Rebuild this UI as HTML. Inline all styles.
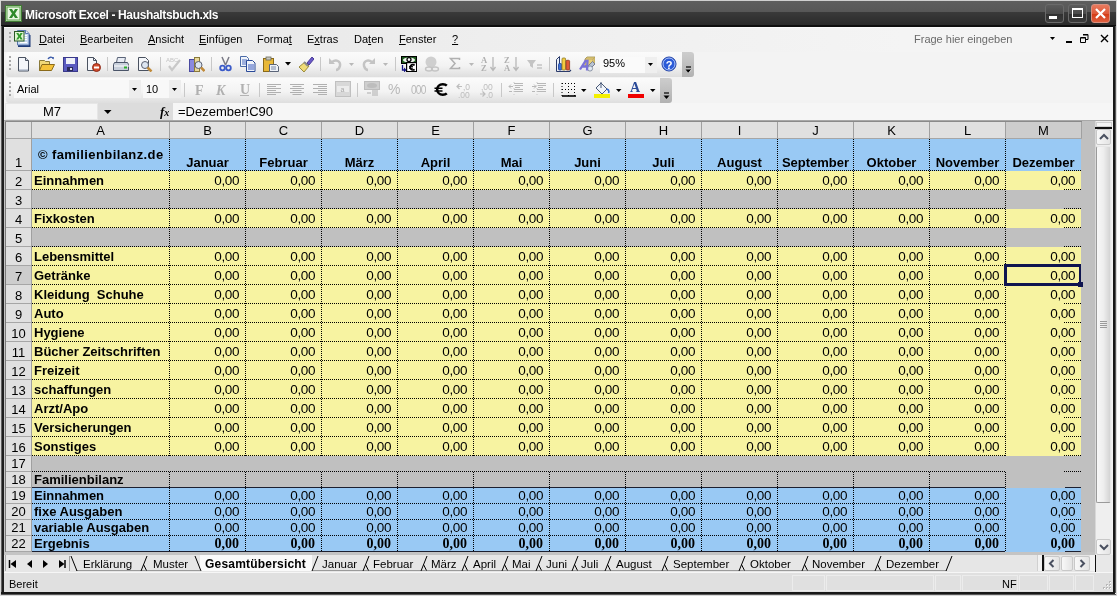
<!DOCTYPE html>
<html><head><meta charset="utf-8">
<style>
*{margin:0;padding:0;box-sizing:border-box}
html,body{-webkit-font-smoothing:antialiased;width:1117px;height:596px;overflow:hidden;background:#f3f3f3;font-family:"Liberation Sans",sans-serif;font-size:11px;color:#000}
.a{position:absolute}
#title{position:absolute;left:0;top:0;width:1117px;height:27px;background:linear-gradient(#cfcfcf 0,#cfcfcf 1px,#5e5e5e 1px,#575757 12px,#3a3a3a 12px,#2a2a2a 25px,#0e0e0e 25px)}
#title .t{position:absolute;left:25px;top:8px;color:#fff;font-weight:bold;font-size:12px;letter-spacing:-0.35px;line-height:14px}
.menu{position:absolute;top:33px;font-size:11px;line-height:13px}
.menu u{text-decoration:underline;text-underline-offset:1px;text-decoration-thickness:1px}
.tb{position:absolute;border-radius:3px;background:linear-gradient(#fbfbfb,#f3f3f3 55%,#dedede)}
.grip{position:absolute;width:2px;height:2px;background:#a8a8a8;box-shadow:0 4px #a8a8a8,0 8px #a8a8a8,0 12px #a8a8a8}
.sep{position:absolute;width:1px;height:18px;background:#c8c8c8}
.chev{position:absolute;border-radius:0 3px 3px 0;background:linear-gradient(#cdcdcd,#b2b2b2)}
.ch{position:absolute;top:123px;height:16px;text-align:center;font-size:13px;line-height:16px}
.rh{position:absolute;left:6px;width:25px;text-align:center;font-size:13px}
.rh span{position:absolute;left:0;width:25px;line-height:15px}
.hd{position:absolute;height:1px;background:repeating-linear-gradient(90deg,#000 0,#000 1px,transparent 1px,transparent 2px)}
.vd{position:absolute;width:1px;background:repeating-linear-gradient(180deg,#000 0,#000 1px,transparent 1px,transparent 2px)}
.tx{position:absolute;font-size:13px;line-height:15px;white-space:nowrap}
.n{font-size:13.5px;letter-spacing:-0.4px}
.b{font-weight:bold}
.c{text-align:center}
.r{text-align:right}
.s{font-family:"Liberation Serif",serif;font-weight:bold;font-size:14px}
.ic{position:absolute;width:16px;height:16px}

.tab{position:absolute;top:558px;font-size:11.5px;line-height:13px;white-space:nowrap}
.sb{position:absolute;border:1px solid #c8c8c8;border-radius:2px;background:linear-gradient(90deg,#f8f8f8,#e4e4e4)}
.sbv{position:absolute;border:1px solid #e8e8e8;border-left-color:#9a9a9a;border-bottom-color:#9a9a9a;border-radius:2px;background:linear-gradient(90deg,#f8f8f8,#eeeeee 50%,#d4d4d4)}
body>div.root{position:absolute;left:0;top:0;width:1117px;height:596px;will-change:transform}
</style></head><body><div class="root">

<div id="title"><div class="t">Microsoft Excel - Haushaltsbuch.xls</div></div>
<svg class="a" style="left:5px;top:5px" width="17" height="17" viewBox="0 0 17 17"><rect x="0.5" y="0.5" width="16" height="16" fill="#cfe8c4" stroke="#3f7a32"/><rect x="2" y="2" width="13" height="13" fill="#e9f6e2" stroke="#5aa04a" stroke-width="1"/><path d="M4 4h3l1.5 2.5L10 4h3l-3 4.5 3 4.5h-3l-1.5-2.5L7 13H4l3-4.5z" fill="#2f8a2a"/></svg>
<div class="a" style="left:1045px;top:4px;width:19px;height:19px;border-radius:3px;border:1px solid #6a6a6a;background:linear-gradient(#5c5c5c,#4a4a4a 50%,#303030 52%,#3a3a3a)"></div>
<div class="a" style="left:1049px;top:16px;width:8px;height:3px;background:#fff"></div>
<div class="a" style="left:1068px;top:4px;width:19px;height:19px;border-radius:3px;border:1px solid #6a6a6a;background:linear-gradient(#5c5c5c,#4a4a4a 50%,#303030 52%,#3a3a3a)"></div>
<div class="a" style="left:1072px;top:8px;width:11px;height:10px;border:1px solid #fff;border-top-width:2px"></div>
<div class="a" style="left:1091px;top:4px;width:19px;height:19px;border-radius:3px;border:1px solid #d89080;background:linear-gradient(#e87a5e,#de5a3a 50%,#d43a14 52%,#e06040)"></div>
<svg class="a" style="left:1091px;top:4px" width="19" height="19" viewBox="0 0 19 19"><path d="M5 5L14 14M14 5L5 14" stroke="#fff" stroke-width="2.2"/></svg>
<div class="a" style="left:0;top:0;width:1px;height:596px;background:#d8d8d8"></div>
<div class="a" style="left:1px;top:26px;width:1px;height:567px;background:#606060"></div><div class="a" style="left:2px;top:26px;width:2px;height:567px;background:#1e1e1e"></div><div class="a" style="left:4px;top:121px;width:1px;height:451px;background:#c4c4c4"></div>
<div class="a" style="left:1113px;top:26px;width:2px;height:567px;background:#181818"></div><div class="a" style="left:1115px;top:26px;width:1px;height:567px;background:#585858"></div>
<div class="a" style="left:1116px;top:0;width:1px;height:596px;background:#d8d8d8"></div>
<div class="a" style="left:1px;top:592px;width:1114px;height:2px;background:#181818"></div><div class="a" style="left:1px;top:594px;width:1115px;height:1px;background:#585858"></div>
<div class="a" style="left:0;top:595px;width:1117px;height:1px;background:#d8d8d8"></div>
<!-- menu bar -->
<div class="a" style="left:4px;top:27px;width:1109px;height:25px;background:linear-gradient(90deg,#e4e4e4,#eeeeee 480px,#f4f4f4 900px);border-top:1px solid #fafafa"></div>
<div class="grip" style="left:9px;top:32px;box-shadow:0 4px #b0b0b0,0 8px #b0b0b0"></div>
<svg class="a" style="left:13px;top:30px" width="19" height="18" viewBox="0 0 19 18"><path d="M5 2h9l3.5 3.5V17H5z" fill="#1e3a78"/><path d="M4.5 .5h8.5l3 3v11.5h-11.5z" fill="#c8daf2" stroke="#5a78b0"/><path d="M12.5 .5v3h3" fill="#eef4fc" stroke="#5a78b0"/><path d="M11 5.5h3M11 7.5h3M11 9.5h3M7 12.5h7" stroke="#fff"/><rect x="1.5" y="1.5" width="9.5" height="9.5" fill="#dff5d0" stroke="#2a5a26"/><path d="M3.2 3h2.2l1 1.8L7.5 3h2.2l-2 3.2 2 3.3H7.5L6.4 7.6 5.3 9.5H3.2l2.1-3.3z" fill="#2f9a2a"/></svg>
<div class="menu" style="left:39px"><u>D</u>atei</div>
<div class="menu" style="left:80px"><u>B</u>earbeiten</div>
<div class="menu" style="left:148px"><u>A</u>nsicht</div>
<div class="menu" style="left:199px"><u>E</u>infügen</div>
<div class="menu" style="left:257px">Forma<u>t</u></div>
<div class="menu" style="left:307px">E<u>x</u>tras</div>
<div class="menu" style="left:354px">Da<u>t</u>en</div>
<div class="menu" style="left:399px"><u>F</u>enster</div>
<div class="menu" style="left:452px"><u>?</u></div>
<div class="menu" style="left:914px;color:#6a6a6a">Frage hier eingeben</div>
<svg class="a" style="left:1050px;top:37px" width="6" height="4"><path d="M0 0h5l-2.5 3z" fill="#000"/></svg>
<div class="a" style="left:1066px;top:41px;width:6px;height:2px;background:#000"></div>
<svg class="a" style="left:1080px;top:34px" width="9" height="9" viewBox="0 0 9 9"><path d="M3 .5h5v5h-2M.5 3.5h5v5h-5z" fill="none" stroke="#000"/><path d="M3 1h5M1 4h5" stroke="#000"/></svg>
<svg class="a" style="left:1100px;top:34px" width="9" height="9" viewBox="0 0 9 9"><path d="M1 1l7 7M8 1L1 8" stroke="#000" stroke-width="1.4"/></svg>

<!-- standard toolbar -->
<div class="tb" style="left:6px;top:52px;width:688px;height:25px"></div>
<div class="chev" style="left:682px;top:52px;width:12px;height:25px"></div>
<svg class="a" style="left:685px;top:66px" width="7" height="8" viewBox="0 0 7 8"><path d="M1 1h5" stroke="#000" stroke-width="1.2"/><path d="M0.5 3.5h6l-3 3.5z" fill="#000"/><path d="M3.5 7l3-3.5" stroke="#fff" stroke-width=".8"/></svg>
<div class="grip" style="left:9px;top:56px"></div>
<!-- new -->
<svg class="ic" style="left:16px;top:56px" viewBox="0 0 16 16"><path d="M2.5 1.5h7l3 3v10.5h-10z" fill="#f4f6fa" stroke="#4a5260"/><path d="M9.5 1.5v3h3" fill="#d8dee8" stroke="#4a5260"/><path d="M3 14h9" stroke="#9aa6bc"/></svg>
<!-- open -->
<svg class="ic" style="left:39px;top:56px" viewBox="0 0 16 16"><path d="M0.5 4.5h5l1 1h4v9h-10z" fill="#f0d878" stroke="#8a7a3a"/><path d="M3 8.5h12.5l-3 6h-12z" fill="#f4c23a" stroke="#8a6a1a"/><path d="M9 3c1-2 4-2.5 5-.5" fill="none" stroke="#3a5aa8" stroke-width="1.3"/><path d="M12.5 1.5l2 2 .5-2.5z" fill="#3a5aa8"/></svg>
<!-- save -->
<svg class="ic" style="left:62px;top:56px" viewBox="0 0 16 16"><rect x="1.5" y="1.5" width="14" height="14" fill="#5a5ac0" stroke="#3a3a8a"/><rect x="4" y="2" width="9" height="6" fill="#eef0f8"/><rect x="5" y="11" width="6" height="4" fill="#2a2a5a"/><rect x="8" y="12" width="2" height="2" fill="#dde"/></svg>
<!-- permission -->
<svg class="ic" style="left:86px;top:56px" viewBox="0 0 16 16"><path d="M1.5 1.5h6l3 3v10h-9z" fill="#f4f6fa" stroke="#4a5260"/><path d="M7.5 1.5v3h3" fill="none" stroke="#4a5260"/><circle cx="10.5" cy="11.5" r="4" fill="#d24a2a" stroke="#8a2a1a"/><rect x="8" y="10.5" width="5" height="2" fill="#fff"/></svg>
<div class="sep" style="left:107px;top:57px;height:14px"></div>
<!-- print -->
<svg class="ic" style="left:113px;top:56px" viewBox="0 0 16 16"><path d="M4.5 1.5h8l-1 5h-8z" fill="#e8ecf4" stroke="#5a6478"/><path d="M1.5 6.5h13l1 2v6h-15v-6z" fill="#c8d0dc" stroke="#4a5468"/><path d="M1 10h15" stroke="#fff"/><rect x="11" y="10.5" width="3" height="2" fill="#2ab02a"/></svg>
<!-- preview -->
<svg class="ic" style="left:137px;top:56px" viewBox="0 0 16 16"><path d="M1.5 1.5h7l3 3v10h-10z" fill="#f4f6fa" stroke="#4a5260"/><circle cx="8" cy="9" r="3.5" fill="#dde6f2" stroke="#5a6070"/><path d="M10.5 11.5l4 4" stroke="#c08a3a" stroke-width="2.5"/></svg>
<div class="sep" style="left:160px;top:57px;height:14px"></div>
<!-- spelling (disabled) -->
<svg class="ic" style="left:166px;top:56px" viewBox="0 0 16 16"><text x="0" y="6" font-size="6" font-family="Liberation Sans" fill="#c4c4c4">ABC</text><path d="M3 10l3 4 8-10" fill="none" stroke="#c8c8c8" stroke-width="2.2"/></svg>
<!-- research -->
<svg class="ic" style="left:189px;top:56px" viewBox="0 0 16 16"><rect x="0.5" y="3.5" width="5" height="12" fill="#8a8ae0" stroke="#4a4aa0"/><rect x="5.5" y="1.5" width="5" height="14" fill="#e8d89a" stroke="#8a7a3a"/><circle cx="9.5" cy="9" r="3.5" fill="#dde6f2" stroke="#5a6070"/><path d="M12 11.5l3.5 3.5" stroke="#c08a3a" stroke-width="2.5"/></svg>
<div class="sep" style="left:211px;top:57px;height:14px"></div>
<!-- cut -->
<svg class="ic" style="left:217px;top:56px" viewBox="0 0 16 16"><path d="M5 1l3.5 8M12 1l-3.5 8" stroke="#7a7a86" stroke-width="1.5"/><circle cx="5.5" cy="12" r="2.3" fill="none" stroke="#3a5ac8" stroke-width="1.8"/><circle cx="11.5" cy="12" r="2.3" fill="none" stroke="#3a5ac8" stroke-width="1.8"/></svg>
<!-- copy -->
<svg class="ic" style="left:240px;top:56px" viewBox="0 0 16 16"><path d="M0.5 0.5h6l2 2v8h-8z" fill="#f0f4fa" stroke="#4a6aa8"/><path d="M2 4h5M2 6h5M2 8h5" stroke="#4a6ac0"/><path d="M6.5 4.5h6l2.5 2.5v8.5h-8.5z" fill="#f0f4fa" stroke="#2a4a98"/><path d="M8 9h6M8 11h6M8 13h6" stroke="#3a5ac0"/></svg>
<!-- paste -->
<svg class="ic" style="left:263px;top:56px" viewBox="0 0 16 16"><rect x="0.5" y="2.5" width="10" height="13" fill="#e8b838" stroke="#8a6a1a"/><rect x="3" y="1" width="5" height="3" fill="#c8c8c0" stroke="#6a6a5a" stroke-width=".8"/><path d="M6.5 8.5h7l2 2v5h-9z" fill="#eef2f8" stroke="#5a6478"/><path d="M8 11h5M8 13h5" stroke="#7a8aa8"/></svg>
<svg class="a" style="left:285px;top:62px" width="7" height="4"><path d="M0 0h6l-3 3.5z" fill="#000"/></svg>
<!-- format painter -->
<svg class="ic" style="left:298px;top:56px" viewBox="0 0 16 16"><path d="M9 7l5-6 2 2-5 6z" fill="#6a5ac8" stroke="#4a3a98"/><path d="M1 11l6-5 4 4-5 6z" fill="#f0dc78" stroke="#9a8a3a"/><path d="M6 6l4 4" stroke="#8a8a8a" stroke-width="2"/></svg>
<div class="sep" style="left:320px;top:57px;height:14px"></div>
<!-- undo -->
<svg class="ic" style="left:327px;top:56px" viewBox="0 0 16 16"><path d="M5 6c4-3 9-1 8 4-1 3-3 4-4 4" fill="none" stroke="#c4c4c4" stroke-width="2.4"/><path d="M2 2v6h6z" fill="#c4c4c4"/></svg>
<svg class="a" style="left:349px;top:63px" width="6" height="4"><path d="M0 0h5l-2.5 3z" fill="#b8b8b8"/></svg>
<!-- redo -->
<svg class="ic" style="left:361px;top:56px" viewBox="0 0 16 16"><path d="M11 6c-4-3-9-1-8 4 1 3 3 4 4 4" fill="none" stroke="#c4c4c4" stroke-width="2.4"/><path d="M14 2v6h-6z" fill="#c4c4c4"/></svg>
<svg class="a" style="left:383px;top:63px" width="6" height="4"><path d="M0 0h5l-2.5 3z" fill="#b8b8b8"/></svg>
<div class="sep" style="left:395px;top:57px;height:14px"></div>
<!-- euro converter -->
<svg class="ic" style="left:401px;top:56px" viewBox="0 0 16 16"><rect x="0.5" y="0.5" width="15" height="7" fill="#1e5a1e" stroke="#000"/><ellipse cx="8" cy="4" rx="6" ry="2.6" fill="#eef6ee"/><circle cx="8" cy="3.6" r="2" fill="#fff" stroke="#000" stroke-width="1.3"/><rect x="5.6" y="6.6" width="10" height="9" fill="#fff" stroke="#000" stroke-width="1.2"/><path d="M13.6 9.3a2.6 2.7 0 1 0 0 4" fill="none" stroke="#000" stroke-width="1.7"/><path d="M8 10.6h4M8 12.2h4" stroke="#000" stroke-width="1"/><path d="M1.5 9v5h2" fill="none" stroke="#141480" stroke-width="1.3"/><path d="M3 11.6l2.6 2.4-2.6 2.4z" fill="#141480"/></svg>
<!-- hyperlink disabled -->
<svg class="ic" style="left:424px;top:56px" viewBox="0 0 16 16"><circle cx="7" cy="6" r="5.5" fill="#cfcfcf"/><ellipse cx="5" cy="13" rx="3.5" ry="2" fill="none" stroke="#c4c4c4" stroke-width="1.4"/><ellipse cx="11" cy="13" rx="3.5" ry="2" fill="none" stroke="#c4c4c4" stroke-width="1.4"/></svg>
<!-- sum -->
<svg class="ic" style="left:447px;top:56px" viewBox="0 0 16 16"><path d="M12.5 4V2.5H3.5l4.5 5-4.5 5H12.5V11" fill="none" stroke="#b0b0b0" stroke-width="1.5"/></svg>
<svg class="a" style="left:469px;top:63px" width="6" height="4"><path d="M0 0h5l-2.5 3z" fill="#b8b8b8"/></svg>
<!-- sort az -->
<svg class="ic" style="left:481px;top:56px" viewBox="0 0 16 16"><text x="0" y="7" font-size="8.5" font-weight="bold" font-family="Liberation Serif" fill="#b0b0b0">A</text><text x="0" y="15" font-size="8.5" font-weight="bold" font-family="Liberation Serif" fill="#b0b0b0">Z</text><path d="M12 1v13M9.5 11l2.5 3.5 2.5-3.5" fill="none" stroke="#b8b8b8" stroke-width="1.3"/></svg>
<svg class="ic" style="left:504px;top:56px" viewBox="0 0 16 16"><text x="0" y="7" font-size="8.5" font-weight="bold" font-family="Liberation Serif" fill="#b0b0b0">Z</text><text x="0" y="15" font-size="8.5" font-weight="bold" font-family="Liberation Serif" fill="#b0b0b0">A</text><path d="M12 1v13M9.5 11l2.5 3.5 2.5-3.5" fill="none" stroke="#b8b8b8" stroke-width="1.3"/></svg>
<!-- filter -->
<svg class="ic" style="left:527px;top:56px" viewBox="0 0 16 16"><path d="M0 4h9L6 8v4L3 10V8z" fill="#c4c4c4"/><path d="M10 9h5M10 12h5" stroke="#c4c4c4" stroke-width="1.6"/></svg>
<div class="sep" style="left:549px;top:57px;height:14px"></div>
<!-- chart -->
<svg class="ic" style="left:556px;top:56px" viewBox="0 0 16 16"><path d="M0.5 15.5V3.5l3-3v12" fill="#e8f0fa" stroke="#2a3a6a"/><path d="M0.5 15.5h13l1.5-1.5" fill="none" stroke="#2a3a6a" stroke-width="1.1"/><rect x="2.5" y="7.5" width="3.2" height="6.5" rx="1" fill="#3a72d8" stroke="#1a3a90" stroke-width=".8"/><rect x="6" y="2" width="3.6" height="12" rx="1" fill="#f4cc40" stroke="#8a7a2a" stroke-width=".8"/><rect x="10" y="4.3" width="3.6" height="9.7" rx="1" fill="#e05a38" stroke="#8a3a1a" stroke-width=".8"/></svg>
<!-- drawing -->
<svg class="ic" style="left:579px;top:56px" viewBox="0 0 16 16"><path d="M6 3l2-2h8v7l-2 2H6z" fill="#e8d078" stroke="#9a8a4a" stroke-width=".8"/><path d="M6 3h8v7M14 3l2-2" fill="none" stroke="#b8a060" stroke-width=".8"/><path d="M9.5 9.5l4-4 2.5 2.5-4 4z" fill="#b8c4d4" stroke="#6a7088" stroke-width=".8"/><circle cx="11" cy="12.5" r="2.6" fill="#e0e8f0" stroke="#7a8498" stroke-width=".8"/><path d="M1 13.5L6.5 5h2l-.5 9.5M3.5 10.5h4.5" fill="none" stroke="#7a72d8" stroke-width="2.3"/></svg>
<!-- zoom box -->
<div class="a" style="left:600px;top:57px;width:57px;height:16px;background:#fafafa"></div>
<div class="a" style="left:645px;top:57px;width:12px;height:16px;background:#efefef"></div>
<div class="a" style="left:603px;top:55px;font-size:11px;line-height:16px">95%</div>
<svg class="a" style="left:648px;top:63px" width="6" height="4"><path d="M0 0h5l-2.5 3z" fill="#000"/></svg>
<!-- help -->
<svg class="ic" style="left:661px;top:56px" viewBox="0 0 16 16"><circle cx="8" cy="8" r="7" fill="#2a5ad8" stroke="#1a3aa0"/><circle cx="8" cy="8" r="6" fill="none" stroke="#cfe0ff" stroke-width=".8"/><text x="4.8" y="12.5" font-size="11" font-weight="bold" font-family="Liberation Sans" fill="#fff">?</text></svg>

<!-- formatting toolbar -->
<div class="tb" style="left:6px;top:78px;width:664px;height:25px"></div>
<div class="chev" style="left:660px;top:78px;width:12px;height:25px"></div>
<svg class="a" style="left:663px;top:92px" width="7" height="8" viewBox="0 0 7 8"><path d="M1 1h5" stroke="#000" stroke-width="1.2"/><path d="M0.5 3.5h6l-3 3.5z" fill="#000"/></svg>
<div class="grip" style="left:9px;top:82px"></div>
<div class="a" style="left:14px;top:80px;width:127px;height:18px;background:#f8f8f8"></div>
<div class="a" style="left:129px;top:80px;width:12px;height:18px;background:#ededed"></div>
<div class="a" style="left:17px;top:81px;font-size:11px;line-height:16px">Arial</div>
<svg class="a" style="left:132px;top:88px" width="6" height="4"><path d="M0 0h5l-2.5 3z" fill="#000"/></svg>
<div class="a" style="left:143px;top:80px;width:38px;height:18px;background:#f8f8f8"></div>
<div class="a" style="left:169px;top:80px;width:12px;height:18px;background:#ededed"></div>
<div class="a" style="left:146px;top:81px;font-size:11px;line-height:16px">10</div>
<svg class="a" style="left:172px;top:88px" width="6" height="4"><path d="M0 0h5l-2.5 3z" fill="#000"/></svg>
<div class="sep" style="left:184px;top:83px;height:14px"></div>
<div class="a" style="left:195px;top:83px;font:bold 14px 'Liberation Serif',serif;color:#b0b0b0;line-height:16px">F</div>
<div class="a" style="left:216px;top:83px;font:bold italic 14px 'Liberation Serif',serif;color:#b0b0b0;line-height:16px">K</div>
<div class="a" style="left:240px;top:82px;font:bold 14px 'Liberation Serif',serif;color:#b0b0b0;line-height:16px">U</div>
<div class="a" style="left:240px;top:95px;width:9px;height:1px;background:#b4b4b4"></div>
<div class="sep" style="left:259px;top:83px;height:14px"></div>
<svg class="ic" style="left:266px;top:82px" viewBox="0 0 16 16"><path d="M1 2.5h14M1 4.5h9M1 6.5h14M1 8.5h9M1 10.5h14M1 12.5h9" stroke="#b0b0b0"/></svg>
<svg class="ic" style="left:289px;top:82px" viewBox="0 0 16 16"><path d="M1 2.5h14M3.5 4.5h9M1 6.5h14M3.5 8.5h9M1 10.5h14M3.5 12.5h9" stroke="#b0b0b0"/></svg>
<svg class="ic" style="left:312px;top:82px" viewBox="0 0 16 16"><path d="M1 2.5h14M6 4.5h9M1 6.5h14M6 8.5h9M1 10.5h14M6 12.5h9" stroke="#b0b0b0"/></svg>
<svg class="ic" style="left:335px;top:81px" viewBox="0 0 16 16"><rect x="0.5" y="0.5" width="15" height="15" fill="#d8d8d8" stroke="#c0c0c0"/><rect x="2" y="5" width="12" height="6" fill="#ececec"/><text x="5.5" y="10.5" font-size="7" font-family="Liberation Sans" fill="#a8a8a8">a</text></svg>
<div class="sep" style="left:357px;top:83px;height:14px"></div>
<svg class="ic" style="left:364px;top:81px" viewBox="0 0 16 16"><rect x="0.5" y="0.5" width="15" height="8" fill="#cfcfcf" stroke="#bdbdbd"/><ellipse cx="8" cy="4.5" rx="5" ry="2.5" fill="#bdbdbd"/><path d="M3 12h4M8 10h6M8 12h6M8 14h6" stroke="#c4c4c4" stroke-width="1.4"/></svg>
<div class="a" style="left:388px;top:80px;font-size:14px;color:#b8b8b8;line-height:18px">%</div>
<div class="a" style="left:411px;top:82px;font-size:12px;color:#b8b8b8;line-height:17px;letter-spacing:-1px;transform:scaleX(0.85);transform-origin:0 0">000</div>
<svg class="a" style="left:434px;top:83px" width="14" height="13" viewBox="0 0 14 13"><path d="M12.8 2.6C11.8 1.6 10.4 1.3 8.8 1.3 5.2 1.3 3.2 3.8 3.2 6.5 3.2 9.4 5.4 11.7 8.8 11.7 10.4 11.7 11.8 11.3 12.8 10.3" fill="none" stroke="#000" stroke-width="2.5"/><path d="M0.5 5.2h8M0.5 8h8" stroke="#000" stroke-width="1.6"/></svg>
<svg class="ic" style="left:456px;top:82px" viewBox="0 0 16 16"><path d="M6 4.5H1M3.5 2L1 4.5 3.5 7" fill="none" stroke="#bdbdbd" stroke-width="1.2"/><text x="7" y="8" font-size="8.5" font-family="Liberation Sans" fill="#bdbdbd">,0</text><text x="2" y="15.5" font-size="8.5" font-family="Liberation Sans" fill="#bdbdbd">,00</text></svg>
<svg class="ic" style="left:479px;top:82px" viewBox="0 0 16 16"><text x="2" y="8" font-size="8.5" font-family="Liberation Sans" fill="#bdbdbd">,00</text><path d="M1 12h5M3.5 9.5L6 12l-2.5 2.5" fill="none" stroke="#bdbdbd" stroke-width="1.2"/><text x="7" y="15.5" font-size="8.5" font-family="Liberation Sans" fill="#bdbdbd">,0</text></svg>
<div class="sep" style="left:501px;top:83px;height:14px"></div>
<svg class="ic" style="left:508px;top:81px" viewBox="0 0 16 16"><path d="M6 2.5h9M7 4.5h8M7 6.5h5M6 8.5h9M1 10.5h3M6 10.5h9" stroke="#b8b8b8"/><path d="M5 5.5L1 5.5M3 3.5l-2 2 2 2" fill="none" stroke="#b8b8b8"/><path d="M6 1v14" stroke="#c8c8c8" stroke-dasharray="1 2"/></svg>
<svg class="ic" style="left:531px;top:81px" viewBox="0 0 16 16"><path d="M6 2.5h9M7 4.5h8M7 6.5h5M6 8.5h9M1 10.5h3M6 10.5h9" stroke="#b8b8b8"/><path d="M1 5.5h4M3 3.5l2 2-2 2" fill="none" stroke="#b8b8b8"/><path d="M6 1v14" stroke="#c8c8c8" stroke-dasharray="1 2"/></svg>
<div class="sep" style="left:553px;top:83px;height:14px"></div>
<svg class="ic" style="left:561px;top:82px" viewBox="0 0 16 16"><path d="M1 1.5h13M1 7.5h13M1 1v13M7.5 1v13M13.5 1v13" stroke="#000" stroke-dasharray="1 2"/><path d="M1 14h14" stroke="#000" stroke-width="1.6"/></svg>
<svg class="a" style="left:581px;top:89px" width="6" height="4"><path d="M0 0h5.5l-2.75 3z" fill="#000"/></svg>
<svg class="ic" style="left:594px;top:81px" viewBox="0 0 16 16"><path d="M2 7l5-5 6 6-5 5z" fill="#f0f4fa" stroke="#4a5a78"/><path d="M7 1v6" stroke="#4a5a78"/><path d="M13 8c2 1 2 3 1.5 4" fill="none" stroke="#3a6ad0" stroke-width="1.5"/></svg>
<div class="a" style="left:594px;top:94px;width:16px;height:4px;background:#f4f000"></div>
<svg class="a" style="left:616px;top:89px" width="6" height="4"><path d="M0 0h5.5l-2.75 3z" fill="#000"/></svg>
<div class="a" style="left:630px;top:80px;font:bold 14px 'Liberation Serif',serif;color:#2a4a98;line-height:16px">A</div>
<div class="a" style="left:628px;top:94px;width:16px;height:4px;background:#f00000"></div>
<svg class="a" style="left:650px;top:89px" width="6" height="4"><path d="M0 0h5.5l-2.75 3z" fill="#000"/></svg>

<!-- formula bar -->
<div class="a" style="left:5px;top:103px;width:93px;height:17px;background:#f5f5f5;border:1px solid #e6e6e6"></div>
<div class="a" style="left:98px;top:103px;width:75px;height:17px;background:#dcdcdc"></div>
<div class="a" style="left:173px;top:103px;width:940px;height:17px;background:#f6f6f6"></div>
<div class="a" style="left:4px;top:120px;width:1109px;height:1px;background:#a8a8a8"></div>
<div class="a" style="left:43px;top:104px;font-size:13px;line-height:15px">M7</div>
<svg class="a" style="left:104px;top:110px" width="8" height="5"><path d="M0 0h7.5l-3.75 4z" fill="#000"/></svg>
<div class="a" style="left:160px;top:104px;font:italic bold 13px 'Liberation Serif',serif;line-height:15px">f<span style="font-size:10px">x</span></div>
<div class="a" style="left:178px;top:104px;font-size:13px;line-height:15px">=Dezember!C90</div>

<div class="a" style="left:5px;top:121px;width:1090px;height:434px;background:#c0c0c0"></div>
<div class="a" style="left:5px;top:121px;width:1px;height:431px;background:#7a7a7a"></div>
<div class="a" style="left:5px;top:121px;width:1077px;height:1px;background:#8a8a8a"></div>
<div class="a" style="left:6px;top:122px;width:1076px;height:16px;background:#e0e0e0"></div>
<div class="a" style="left:1006px;top:122px;width:75px;height:16px;background:#cdcdcd"></div>
<div class="a" style="left:6px;top:138px;width:1076px;height:1px;background:#a6a6a6"></div>
<div class="a" style="left:31px;top:122px;width:1px;height:16px;background:#a0a0a0"></div>
<div class="a" style="left:169px;top:122px;width:1px;height:16px;background:#a0a0a0"></div>
<div class="ch" style="left:32px;width:137px">A</div>
<div class="a" style="left:245px;top:122px;width:1px;height:16px;background:#a0a0a0"></div>
<div class="ch" style="left:170px;width:75px">B</div>
<div class="a" style="left:321px;top:122px;width:1px;height:16px;background:#a0a0a0"></div>
<div class="ch" style="left:246px;width:75px">C</div>
<div class="a" style="left:397px;top:122px;width:1px;height:16px;background:#a0a0a0"></div>
<div class="ch" style="left:322px;width:75px">D</div>
<div class="a" style="left:473px;top:122px;width:1px;height:16px;background:#a0a0a0"></div>
<div class="ch" style="left:398px;width:75px">E</div>
<div class="a" style="left:549px;top:122px;width:1px;height:16px;background:#a0a0a0"></div>
<div class="ch" style="left:474px;width:75px">F</div>
<div class="a" style="left:625px;top:122px;width:1px;height:16px;background:#a0a0a0"></div>
<div class="ch" style="left:550px;width:75px">G</div>
<div class="a" style="left:701px;top:122px;width:1px;height:16px;background:#a0a0a0"></div>
<div class="ch" style="left:626px;width:75px">H</div>
<div class="a" style="left:777px;top:122px;width:1px;height:16px;background:#a0a0a0"></div>
<div class="ch" style="left:702px;width:75px">I</div>
<div class="a" style="left:853px;top:122px;width:1px;height:16px;background:#a0a0a0"></div>
<div class="ch" style="left:778px;width:75px">J</div>
<div class="a" style="left:929px;top:122px;width:1px;height:16px;background:#a0a0a0"></div>
<div class="ch" style="left:854px;width:75px">K</div>
<div class="a" style="left:1005px;top:122px;width:1px;height:16px;background:#a0a0a0"></div>
<div class="ch" style="left:930px;width:75px">L</div>
<div class="a" style="left:1081px;top:122px;width:1px;height:16px;background:#a0a0a0"></div>
<div class="ch" style="left:1006px;width:75px">M</div>
<div class="rh" style="top:139px;height:31px;background:#e0e0e0"><span style="top:16px">1</span></div>
<div class="a" style="left:6px;top:170px;width:25px;height:1px;background:#a6a6a6"></div>
<div class="rh" style="top:171px;height:18px;background:#e0e0e0"><span style="top:3px">2</span></div>
<div class="a" style="left:6px;top:189px;width:25px;height:1px;background:#a6a6a6"></div>
<div class="rh" style="top:190px;height:18px;background:#e0e0e0"><span style="top:3px">3</span></div>
<div class="a" style="left:6px;top:208px;width:25px;height:1px;background:#a6a6a6"></div>
<div class="rh" style="top:209px;height:18px;background:#e0e0e0"><span style="top:3px">4</span></div>
<div class="a" style="left:6px;top:227px;width:25px;height:1px;background:#a6a6a6"></div>
<div class="rh" style="top:228px;height:18px;background:#e0e0e0"><span style="top:3px">5</span></div>
<div class="a" style="left:6px;top:246px;width:25px;height:1px;background:#a6a6a6"></div>
<div class="rh" style="top:247px;height:18px;background:#e0e0e0"><span style="top:3px">6</span></div>
<div class="a" style="left:6px;top:265px;width:25px;height:1px;background:#a6a6a6"></div>
<div class="rh" style="top:266px;height:18px;background:#cdcdcd"><span style="top:3px">7</span></div>
<div class="a" style="left:6px;top:284px;width:25px;height:1px;background:#a6a6a6"></div>
<div class="rh" style="top:285px;height:18px;background:#e0e0e0"><span style="top:3px">8</span></div>
<div class="a" style="left:6px;top:303px;width:25px;height:1px;background:#a6a6a6"></div>
<div class="rh" style="top:304px;height:18px;background:#e0e0e0"><span style="top:3px">9</span></div>
<div class="a" style="left:6px;top:322px;width:25px;height:1px;background:#a6a6a6"></div>
<div class="rh" style="top:323px;height:18px;background:#e0e0e0"><span style="top:3px">10</span></div>
<div class="a" style="left:6px;top:341px;width:25px;height:1px;background:#a6a6a6"></div>
<div class="rh" style="top:342px;height:18px;background:#e0e0e0"><span style="top:3px">11</span></div>
<div class="a" style="left:6px;top:360px;width:25px;height:1px;background:#a6a6a6"></div>
<div class="rh" style="top:361px;height:18px;background:#e0e0e0"><span style="top:3px">12</span></div>
<div class="a" style="left:6px;top:379px;width:25px;height:1px;background:#a6a6a6"></div>
<div class="rh" style="top:380px;height:18px;background:#e0e0e0"><span style="top:3px">13</span></div>
<div class="a" style="left:6px;top:398px;width:25px;height:1px;background:#a6a6a6"></div>
<div class="rh" style="top:399px;height:18px;background:#e0e0e0"><span style="top:3px">14</span></div>
<div class="a" style="left:6px;top:417px;width:25px;height:1px;background:#a6a6a6"></div>
<div class="rh" style="top:418px;height:18px;background:#e0e0e0"><span style="top:3px">15</span></div>
<div class="a" style="left:6px;top:436px;width:25px;height:1px;background:#a6a6a6"></div>
<div class="rh" style="top:437px;height:18px;background:#e0e0e0"><span style="top:3px">16</span></div>
<div class="a" style="left:6px;top:455px;width:25px;height:1px;background:#a6a6a6"></div>
<div class="rh" style="top:456px;height:15px;background:#e0e0e0"><span style="top:0px">17</span></div>
<div class="a" style="left:6px;top:471px;width:25px;height:1px;background:#a6a6a6"></div>
<div class="rh" style="top:472px;height:15px;background:#e0e0e0"><span style="top:0px">18</span></div>
<div class="a" style="left:6px;top:487px;width:25px;height:1px;background:#a6a6a6"></div>
<div class="rh" style="top:488px;height:15px;background:#e0e0e0"><span style="top:0px">19</span></div>
<div class="a" style="left:6px;top:503px;width:25px;height:1px;background:#a6a6a6"></div>
<div class="rh" style="top:504px;height:15px;background:#e0e0e0"><span style="top:0px">20</span></div>
<div class="a" style="left:6px;top:519px;width:25px;height:1px;background:#a6a6a6"></div>
<div class="rh" style="top:520px;height:15px;background:#e0e0e0"><span style="top:0px">21</span></div>
<div class="a" style="left:6px;top:535px;width:25px;height:1px;background:#a6a6a6"></div>
<div class="rh" style="top:536px;height:15px;background:#e0e0e0"><span style="top:0px">22</span></div>
<div class="a" style="left:6px;top:551px;width:25px;height:1px;background:#a6a6a6"></div>
<div class="a" style="left:31px;top:138px;width:1px;height:414px;background:#a0a0a0"></div>
<div class="a" style="left:32px;top:139px;width:1049px;height:32px;background:#99c9f4"></div>
<div class="a" style="left:32px;top:171px;width:1049px;height:19px;background:#f7f3a1"></div>
<div class="a" style="left:32px;top:190px;width:1049px;height:19px;background:#c0c0c0"></div>
<div class="a" style="left:32px;top:209px;width:1049px;height:19px;background:#f7f3a1"></div>
<div class="a" style="left:32px;top:228px;width:1049px;height:19px;background:#c0c0c0"></div>
<div class="a" style="left:32px;top:247px;width:1049px;height:19px;background:#f7f3a1"></div>
<div class="a" style="left:32px;top:266px;width:1049px;height:19px;background:#f7f3a1"></div>
<div class="a" style="left:32px;top:285px;width:1049px;height:19px;background:#f7f3a1"></div>
<div class="a" style="left:32px;top:304px;width:1049px;height:19px;background:#f7f3a1"></div>
<div class="a" style="left:32px;top:323px;width:1049px;height:19px;background:#f7f3a1"></div>
<div class="a" style="left:32px;top:342px;width:1049px;height:19px;background:#f7f3a1"></div>
<div class="a" style="left:32px;top:361px;width:1049px;height:19px;background:#f7f3a1"></div>
<div class="a" style="left:32px;top:380px;width:1049px;height:19px;background:#f7f3a1"></div>
<div class="a" style="left:32px;top:399px;width:1049px;height:19px;background:#f7f3a1"></div>
<div class="a" style="left:32px;top:418px;width:1049px;height:19px;background:#f7f3a1"></div>
<div class="a" style="left:32px;top:437px;width:1049px;height:19px;background:#f7f3a1"></div>
<div class="a" style="left:32px;top:456px;width:1049px;height:16px;background:#c0c0c0"></div>
<div class="a" style="left:32px;top:472px;width:1049px;height:16px;background:#c0c0c0"></div>
<div class="a" style="left:32px;top:488px;width:1049px;height:16px;background:#99c9f4"></div>
<div class="a" style="left:32px;top:504px;width:1049px;height:16px;background:#99c9f4"></div>
<div class="a" style="left:32px;top:520px;width:1049px;height:16px;background:#99c9f4"></div>
<div class="a" style="left:32px;top:536px;width:1049px;height:16px;background:#99c9f4"></div>
<div class="hd" style="left:32px;top:170px;width:973px"></div>
<div class="hd" style="left:1064px;top:170px;width:17px"></div>
<div class="hd" style="left:32px;top:189px;width:973px"></div>
<div class="hd" style="left:1064px;top:189px;width:17px"></div>
<div class="hd" style="left:32px;top:208px;width:973px"></div>
<div class="hd" style="left:1064px;top:208px;width:17px"></div>
<div class="hd" style="left:32px;top:227px;width:973px"></div>
<div class="hd" style="left:1064px;top:227px;width:17px"></div>
<div class="hd" style="left:32px;top:246px;width:973px"></div>
<div class="hd" style="left:1064px;top:246px;width:17px"></div>
<div class="hd" style="left:32px;top:265px;width:973px"></div>
<div class="hd" style="left:1064px;top:265px;width:17px"></div>
<div class="hd" style="left:32px;top:284px;width:973px"></div>
<div class="hd" style="left:1064px;top:284px;width:17px"></div>
<div class="hd" style="left:32px;top:303px;width:973px"></div>
<div class="hd" style="left:1064px;top:303px;width:17px"></div>
<div class="hd" style="left:32px;top:322px;width:973px"></div>
<div class="hd" style="left:1064px;top:322px;width:17px"></div>
<div class="hd" style="left:32px;top:341px;width:973px"></div>
<div class="hd" style="left:1064px;top:341px;width:17px"></div>
<div class="hd" style="left:32px;top:360px;width:973px"></div>
<div class="hd" style="left:1064px;top:360px;width:17px"></div>
<div class="hd" style="left:32px;top:379px;width:973px"></div>
<div class="hd" style="left:1064px;top:379px;width:17px"></div>
<div class="hd" style="left:32px;top:398px;width:973px"></div>
<div class="hd" style="left:1064px;top:398px;width:17px"></div>
<div class="hd" style="left:32px;top:417px;width:973px"></div>
<div class="hd" style="left:1064px;top:417px;width:17px"></div>
<div class="hd" style="left:32px;top:436px;width:973px"></div>
<div class="hd" style="left:1064px;top:436px;width:17px"></div>
<div class="hd" style="left:32px;top:455px;width:973px"></div>
<div class="hd" style="left:1064px;top:455px;width:17px"></div>
<div class="hd" style="left:32px;top:471px;width:973px"></div>
<div class="hd" style="left:1064px;top:471px;width:17px"></div>
<div class="a" style="left:32px;top:487px;width:973px;height:1px;background:#1c2030"></div>
<div class="a" style="left:1065px;top:487px;width:16px;height:1px;background:#1c2030"></div>
<div class="hd" style="left:32px;top:503px;width:973px"></div>
<div class="hd" style="left:1064px;top:503px;width:17px"></div>
<div class="hd" style="left:32px;top:519px;width:973px"></div>
<div class="hd" style="left:1064px;top:519px;width:17px"></div>
<div class="hd" style="left:32px;top:535px;width:973px"></div>
<div class="hd" style="left:1064px;top:535px;width:17px"></div>
<div class="a" style="left:32px;top:551px;width:973px;height:1px;background:#1c2030"></div>
<div class="a" style="left:1065px;top:551px;width:16px;height:1px;background:#1c2030"></div>
<div class="vd" style="left:169px;top:139px;height:317px"></div>
<div class="vd" style="left:169px;top:472px;height:80px"></div>
<div class="vd" style="left:245px;top:139px;height:317px"></div>
<div class="vd" style="left:245px;top:472px;height:80px"></div>
<div class="vd" style="left:321px;top:139px;height:317px"></div>
<div class="vd" style="left:321px;top:472px;height:80px"></div>
<div class="vd" style="left:397px;top:139px;height:317px"></div>
<div class="vd" style="left:397px;top:472px;height:80px"></div>
<div class="vd" style="left:473px;top:139px;height:317px"></div>
<div class="vd" style="left:473px;top:472px;height:80px"></div>
<div class="vd" style="left:549px;top:139px;height:317px"></div>
<div class="vd" style="left:549px;top:472px;height:80px"></div>
<div class="vd" style="left:625px;top:139px;height:317px"></div>
<div class="vd" style="left:625px;top:472px;height:80px"></div>
<div class="vd" style="left:701px;top:139px;height:317px"></div>
<div class="vd" style="left:701px;top:472px;height:80px"></div>
<div class="vd" style="left:777px;top:139px;height:317px"></div>
<div class="vd" style="left:777px;top:472px;height:80px"></div>
<div class="vd" style="left:853px;top:139px;height:317px"></div>
<div class="vd" style="left:853px;top:472px;height:80px"></div>
<div class="vd" style="left:929px;top:139px;height:317px"></div>
<div class="vd" style="left:929px;top:472px;height:80px"></div>
<div class="vd" style="left:1005px;top:139px;height:317px"></div>
<div class="vd" style="left:1005px;top:472px;height:80px"></div>
<div class="tx b" style="left:38px;top:147px;letter-spacing:0.4px">© familienbilanz.de</div>
<div class="tx b c" style="left:170px;width:75px;top:155px">Januar</div>
<div class="tx b c" style="left:246px;width:75px;top:155px">Februar</div>
<div class="tx b c" style="left:322px;width:75px;top:155px">März</div>
<div class="tx b c" style="left:398px;width:75px;top:155px">April</div>
<div class="tx b c" style="left:474px;width:75px;top:155px">Mai</div>
<div class="tx b c" style="left:550px;width:75px;top:155px">Juni</div>
<div class="tx b c" style="left:626px;width:75px;top:155px">Juli</div>
<div class="tx b c" style="left:702px;width:75px;top:155px">August</div>
<div class="tx b c" style="left:778px;width:75px;top:155px">September</div>
<div class="tx b c" style="left:854px;width:75px;top:155px">Oktober</div>
<div class="tx b c" style="left:930px;width:75px;top:155px">November</div>
<div class="tx b c" style="left:1006px;width:75px;top:155px">Dezember</div>
<div class="tx b" style="left:34px;top:173px">Einnahmen</div>
<div class="tx r n" style="left:170px;width:69px;top:173px">0,00</div>
<div class="tx r n" style="left:246px;width:69px;top:173px">0,00</div>
<div class="tx r n" style="left:322px;width:69px;top:173px">0,00</div>
<div class="tx r n" style="left:398px;width:69px;top:173px">0,00</div>
<div class="tx r n" style="left:474px;width:69px;top:173px">0,00</div>
<div class="tx r n" style="left:550px;width:69px;top:173px">0,00</div>
<div class="tx r n" style="left:626px;width:69px;top:173px">0,00</div>
<div class="tx r n" style="left:702px;width:69px;top:173px">0,00</div>
<div class="tx r n" style="left:778px;width:69px;top:173px">0,00</div>
<div class="tx r n" style="left:854px;width:69px;top:173px">0,00</div>
<div class="tx r n" style="left:930px;width:69px;top:173px">0,00</div>
<div class="tx r n" style="left:1006px;width:69px;top:173px">0,00</div>
<div class="tx b" style="left:34px;top:211px">Fixkosten</div>
<div class="tx r n" style="left:170px;width:69px;top:211px">0,00</div>
<div class="tx r n" style="left:246px;width:69px;top:211px">0,00</div>
<div class="tx r n" style="left:322px;width:69px;top:211px">0,00</div>
<div class="tx r n" style="left:398px;width:69px;top:211px">0,00</div>
<div class="tx r n" style="left:474px;width:69px;top:211px">0,00</div>
<div class="tx r n" style="left:550px;width:69px;top:211px">0,00</div>
<div class="tx r n" style="left:626px;width:69px;top:211px">0,00</div>
<div class="tx r n" style="left:702px;width:69px;top:211px">0,00</div>
<div class="tx r n" style="left:778px;width:69px;top:211px">0,00</div>
<div class="tx r n" style="left:854px;width:69px;top:211px">0,00</div>
<div class="tx r n" style="left:930px;width:69px;top:211px">0,00</div>
<div class="tx r n" style="left:1006px;width:69px;top:211px">0,00</div>
<div class="tx b" style="left:34px;top:249px">Lebensmittel</div>
<div class="tx r n" style="left:170px;width:69px;top:249px">0,00</div>
<div class="tx r n" style="left:246px;width:69px;top:249px">0,00</div>
<div class="tx r n" style="left:322px;width:69px;top:249px">0,00</div>
<div class="tx r n" style="left:398px;width:69px;top:249px">0,00</div>
<div class="tx r n" style="left:474px;width:69px;top:249px">0,00</div>
<div class="tx r n" style="left:550px;width:69px;top:249px">0,00</div>
<div class="tx r n" style="left:626px;width:69px;top:249px">0,00</div>
<div class="tx r n" style="left:702px;width:69px;top:249px">0,00</div>
<div class="tx r n" style="left:778px;width:69px;top:249px">0,00</div>
<div class="tx r n" style="left:854px;width:69px;top:249px">0,00</div>
<div class="tx r n" style="left:930px;width:69px;top:249px">0,00</div>
<div class="tx r n" style="left:1006px;width:69px;top:249px">0,00</div>
<div class="tx b" style="left:34px;top:268px">Getränke</div>
<div class="tx r n" style="left:170px;width:69px;top:268px">0,00</div>
<div class="tx r n" style="left:246px;width:69px;top:268px">0,00</div>
<div class="tx r n" style="left:322px;width:69px;top:268px">0,00</div>
<div class="tx r n" style="left:398px;width:69px;top:268px">0,00</div>
<div class="tx r n" style="left:474px;width:69px;top:268px">0,00</div>
<div class="tx r n" style="left:550px;width:69px;top:268px">0,00</div>
<div class="tx r n" style="left:626px;width:69px;top:268px">0,00</div>
<div class="tx r n" style="left:702px;width:69px;top:268px">0,00</div>
<div class="tx r n" style="left:778px;width:69px;top:268px">0,00</div>
<div class="tx r n" style="left:854px;width:69px;top:268px">0,00</div>
<div class="tx r n" style="left:930px;width:69px;top:268px">0,00</div>
<div class="tx r n" style="left:1006px;width:69px;top:268px">0,00</div>
<div class="tx b" style="left:34px;top:287px">Kleidung&nbsp; Schuhe</div>
<div class="tx r n" style="left:170px;width:69px;top:287px">0,00</div>
<div class="tx r n" style="left:246px;width:69px;top:287px">0,00</div>
<div class="tx r n" style="left:322px;width:69px;top:287px">0,00</div>
<div class="tx r n" style="left:398px;width:69px;top:287px">0,00</div>
<div class="tx r n" style="left:474px;width:69px;top:287px">0,00</div>
<div class="tx r n" style="left:550px;width:69px;top:287px">0,00</div>
<div class="tx r n" style="left:626px;width:69px;top:287px">0,00</div>
<div class="tx r n" style="left:702px;width:69px;top:287px">0,00</div>
<div class="tx r n" style="left:778px;width:69px;top:287px">0,00</div>
<div class="tx r n" style="left:854px;width:69px;top:287px">0,00</div>
<div class="tx r n" style="left:930px;width:69px;top:287px">0,00</div>
<div class="tx r n" style="left:1006px;width:69px;top:287px">0,00</div>
<div class="tx b" style="left:34px;top:306px">Auto</div>
<div class="tx r n" style="left:170px;width:69px;top:306px">0,00</div>
<div class="tx r n" style="left:246px;width:69px;top:306px">0,00</div>
<div class="tx r n" style="left:322px;width:69px;top:306px">0,00</div>
<div class="tx r n" style="left:398px;width:69px;top:306px">0,00</div>
<div class="tx r n" style="left:474px;width:69px;top:306px">0,00</div>
<div class="tx r n" style="left:550px;width:69px;top:306px">0,00</div>
<div class="tx r n" style="left:626px;width:69px;top:306px">0,00</div>
<div class="tx r n" style="left:702px;width:69px;top:306px">0,00</div>
<div class="tx r n" style="left:778px;width:69px;top:306px">0,00</div>
<div class="tx r n" style="left:854px;width:69px;top:306px">0,00</div>
<div class="tx r n" style="left:930px;width:69px;top:306px">0,00</div>
<div class="tx r n" style="left:1006px;width:69px;top:306px">0,00</div>
<div class="tx b" style="left:34px;top:325px">Hygiene</div>
<div class="tx r n" style="left:170px;width:69px;top:325px">0,00</div>
<div class="tx r n" style="left:246px;width:69px;top:325px">0,00</div>
<div class="tx r n" style="left:322px;width:69px;top:325px">0,00</div>
<div class="tx r n" style="left:398px;width:69px;top:325px">0,00</div>
<div class="tx r n" style="left:474px;width:69px;top:325px">0,00</div>
<div class="tx r n" style="left:550px;width:69px;top:325px">0,00</div>
<div class="tx r n" style="left:626px;width:69px;top:325px">0,00</div>
<div class="tx r n" style="left:702px;width:69px;top:325px">0,00</div>
<div class="tx r n" style="left:778px;width:69px;top:325px">0,00</div>
<div class="tx r n" style="left:854px;width:69px;top:325px">0,00</div>
<div class="tx r n" style="left:930px;width:69px;top:325px">0,00</div>
<div class="tx r n" style="left:1006px;width:69px;top:325px">0,00</div>
<div class="tx b" style="left:34px;top:344px">Bücher Zeitschriften</div>
<div class="tx r n" style="left:170px;width:69px;top:344px">0,00</div>
<div class="tx r n" style="left:246px;width:69px;top:344px">0,00</div>
<div class="tx r n" style="left:322px;width:69px;top:344px">0,00</div>
<div class="tx r n" style="left:398px;width:69px;top:344px">0,00</div>
<div class="tx r n" style="left:474px;width:69px;top:344px">0,00</div>
<div class="tx r n" style="left:550px;width:69px;top:344px">0,00</div>
<div class="tx r n" style="left:626px;width:69px;top:344px">0,00</div>
<div class="tx r n" style="left:702px;width:69px;top:344px">0,00</div>
<div class="tx r n" style="left:778px;width:69px;top:344px">0,00</div>
<div class="tx r n" style="left:854px;width:69px;top:344px">0,00</div>
<div class="tx r n" style="left:930px;width:69px;top:344px">0,00</div>
<div class="tx r n" style="left:1006px;width:69px;top:344px">0,00</div>
<div class="tx b" style="left:34px;top:363px">Freizeit</div>
<div class="tx r n" style="left:170px;width:69px;top:363px">0,00</div>
<div class="tx r n" style="left:246px;width:69px;top:363px">0,00</div>
<div class="tx r n" style="left:322px;width:69px;top:363px">0,00</div>
<div class="tx r n" style="left:398px;width:69px;top:363px">0,00</div>
<div class="tx r n" style="left:474px;width:69px;top:363px">0,00</div>
<div class="tx r n" style="left:550px;width:69px;top:363px">0,00</div>
<div class="tx r n" style="left:626px;width:69px;top:363px">0,00</div>
<div class="tx r n" style="left:702px;width:69px;top:363px">0,00</div>
<div class="tx r n" style="left:778px;width:69px;top:363px">0,00</div>
<div class="tx r n" style="left:854px;width:69px;top:363px">0,00</div>
<div class="tx r n" style="left:930px;width:69px;top:363px">0,00</div>
<div class="tx r n" style="left:1006px;width:69px;top:363px">0,00</div>
<div class="tx b" style="left:34px;top:382px">schaffungen</div>
<div class="tx r n" style="left:170px;width:69px;top:382px">0,00</div>
<div class="tx r n" style="left:246px;width:69px;top:382px">0,00</div>
<div class="tx r n" style="left:322px;width:69px;top:382px">0,00</div>
<div class="tx r n" style="left:398px;width:69px;top:382px">0,00</div>
<div class="tx r n" style="left:474px;width:69px;top:382px">0,00</div>
<div class="tx r n" style="left:550px;width:69px;top:382px">0,00</div>
<div class="tx r n" style="left:626px;width:69px;top:382px">0,00</div>
<div class="tx r n" style="left:702px;width:69px;top:382px">0,00</div>
<div class="tx r n" style="left:778px;width:69px;top:382px">0,00</div>
<div class="tx r n" style="left:854px;width:69px;top:382px">0,00</div>
<div class="tx r n" style="left:930px;width:69px;top:382px">0,00</div>
<div class="tx r n" style="left:1006px;width:69px;top:382px">0,00</div>
<div class="tx b" style="left:34px;top:401px">Arzt/Apo</div>
<div class="tx r n" style="left:170px;width:69px;top:401px">0,00</div>
<div class="tx r n" style="left:246px;width:69px;top:401px">0,00</div>
<div class="tx r n" style="left:322px;width:69px;top:401px">0,00</div>
<div class="tx r n" style="left:398px;width:69px;top:401px">0,00</div>
<div class="tx r n" style="left:474px;width:69px;top:401px">0,00</div>
<div class="tx r n" style="left:550px;width:69px;top:401px">0,00</div>
<div class="tx r n" style="left:626px;width:69px;top:401px">0,00</div>
<div class="tx r n" style="left:702px;width:69px;top:401px">0,00</div>
<div class="tx r n" style="left:778px;width:69px;top:401px">0,00</div>
<div class="tx r n" style="left:854px;width:69px;top:401px">0,00</div>
<div class="tx r n" style="left:930px;width:69px;top:401px">0,00</div>
<div class="tx r n" style="left:1006px;width:69px;top:401px">0,00</div>
<div class="tx b" style="left:34px;top:420px">Versicherungen</div>
<div class="tx r n" style="left:170px;width:69px;top:420px">0,00</div>
<div class="tx r n" style="left:246px;width:69px;top:420px">0,00</div>
<div class="tx r n" style="left:322px;width:69px;top:420px">0,00</div>
<div class="tx r n" style="left:398px;width:69px;top:420px">0,00</div>
<div class="tx r n" style="left:474px;width:69px;top:420px">0,00</div>
<div class="tx r n" style="left:550px;width:69px;top:420px">0,00</div>
<div class="tx r n" style="left:626px;width:69px;top:420px">0,00</div>
<div class="tx r n" style="left:702px;width:69px;top:420px">0,00</div>
<div class="tx r n" style="left:778px;width:69px;top:420px">0,00</div>
<div class="tx r n" style="left:854px;width:69px;top:420px">0,00</div>
<div class="tx r n" style="left:930px;width:69px;top:420px">0,00</div>
<div class="tx r n" style="left:1006px;width:69px;top:420px">0,00</div>
<div class="tx b" style="left:34px;top:439px">Sonstiges</div>
<div class="tx r n" style="left:170px;width:69px;top:439px">0,00</div>
<div class="tx r n" style="left:246px;width:69px;top:439px">0,00</div>
<div class="tx r n" style="left:322px;width:69px;top:439px">0,00</div>
<div class="tx r n" style="left:398px;width:69px;top:439px">0,00</div>
<div class="tx r n" style="left:474px;width:69px;top:439px">0,00</div>
<div class="tx r n" style="left:550px;width:69px;top:439px">0,00</div>
<div class="tx r n" style="left:626px;width:69px;top:439px">0,00</div>
<div class="tx r n" style="left:702px;width:69px;top:439px">0,00</div>
<div class="tx r n" style="left:778px;width:69px;top:439px">0,00</div>
<div class="tx r n" style="left:854px;width:69px;top:439px">0,00</div>
<div class="tx r n" style="left:930px;width:69px;top:439px">0,00</div>
<div class="tx r n" style="left:1006px;width:69px;top:439px">0,00</div>
<div class="tx b" style="left:34px;top:472px">Familienbilanz</div>
<div class="tx b" style="left:34px;top:488px">Einnahmen</div>
<div class="tx r n" style="left:170px;width:69px;top:488px">0,00</div>
<div class="tx r n" style="left:246px;width:69px;top:488px">0,00</div>
<div class="tx r n" style="left:322px;width:69px;top:488px">0,00</div>
<div class="tx r n" style="left:398px;width:69px;top:488px">0,00</div>
<div class="tx r n" style="left:474px;width:69px;top:488px">0,00</div>
<div class="tx r n" style="left:550px;width:69px;top:488px">0,00</div>
<div class="tx r n" style="left:626px;width:69px;top:488px">0,00</div>
<div class="tx r n" style="left:702px;width:69px;top:488px">0,00</div>
<div class="tx r n" style="left:778px;width:69px;top:488px">0,00</div>
<div class="tx r n" style="left:854px;width:69px;top:488px">0,00</div>
<div class="tx r n" style="left:930px;width:69px;top:488px">0,00</div>
<div class="tx r n" style="left:1006px;width:69px;top:488px">0,00</div>
<div class="tx b" style="left:34px;top:504px">fixe Ausgaben</div>
<div class="tx r n" style="left:170px;width:69px;top:504px">0,00</div>
<div class="tx r n" style="left:246px;width:69px;top:504px">0,00</div>
<div class="tx r n" style="left:322px;width:69px;top:504px">0,00</div>
<div class="tx r n" style="left:398px;width:69px;top:504px">0,00</div>
<div class="tx r n" style="left:474px;width:69px;top:504px">0,00</div>
<div class="tx r n" style="left:550px;width:69px;top:504px">0,00</div>
<div class="tx r n" style="left:626px;width:69px;top:504px">0,00</div>
<div class="tx r n" style="left:702px;width:69px;top:504px">0,00</div>
<div class="tx r n" style="left:778px;width:69px;top:504px">0,00</div>
<div class="tx r n" style="left:854px;width:69px;top:504px">0,00</div>
<div class="tx r n" style="left:930px;width:69px;top:504px">0,00</div>
<div class="tx r n" style="left:1006px;width:69px;top:504px">0,00</div>
<div class="tx b" style="left:34px;top:520px">variable Ausgaben</div>
<div class="tx r n" style="left:170px;width:69px;top:520px">0,00</div>
<div class="tx r n" style="left:246px;width:69px;top:520px">0,00</div>
<div class="tx r n" style="left:322px;width:69px;top:520px">0,00</div>
<div class="tx r n" style="left:398px;width:69px;top:520px">0,00</div>
<div class="tx r n" style="left:474px;width:69px;top:520px">0,00</div>
<div class="tx r n" style="left:550px;width:69px;top:520px">0,00</div>
<div class="tx r n" style="left:626px;width:69px;top:520px">0,00</div>
<div class="tx r n" style="left:702px;width:69px;top:520px">0,00</div>
<div class="tx r n" style="left:778px;width:69px;top:520px">0,00</div>
<div class="tx r n" style="left:854px;width:69px;top:520px">0,00</div>
<div class="tx r n" style="left:930px;width:69px;top:520px">0,00</div>
<div class="tx r n" style="left:1006px;width:69px;top:520px">0,00</div>
<div class="tx b" style="left:34px;top:536px">Ergebnis</div>
<div class="tx r s" style="left:170px;width:69px;top:536px">0,00</div>
<div class="tx r s" style="left:246px;width:69px;top:536px">0,00</div>
<div class="tx r s" style="left:322px;width:69px;top:536px">0,00</div>
<div class="tx r s" style="left:398px;width:69px;top:536px">0,00</div>
<div class="tx r s" style="left:474px;width:69px;top:536px">0,00</div>
<div class="tx r s" style="left:550px;width:69px;top:536px">0,00</div>
<div class="tx r s" style="left:626px;width:69px;top:536px">0,00</div>
<div class="tx r s" style="left:702px;width:69px;top:536px">0,00</div>
<div class="tx r s" style="left:778px;width:69px;top:536px">0,00</div>
<div class="tx r s" style="left:854px;width:69px;top:536px">0,00</div>
<div class="tx r s" style="left:930px;width:69px;top:536px">0,00</div>
<div class="tx r s" style="left:1006px;width:69px;top:536px">0,00</div>
<div class="a" style="left:1004px;top:264px;width:77px;height:22px;border:3px solid #0e1450;border-right-width:2px"></div>
<div class="a" style="left:1078px;top:282px;width:5px;height:5px;background:#0e1450"></div>
<!-- tab bar -->
<div class="a" style="left:4px;top:555px;width:1092px;height:17px;background:#e6e6e6"></div>
<div class="a" style="left:5px;top:552px;width:1090px;height:3px;background:#c4c4c4"></div>
<div class="a" style="left:5px;top:555px;width:1px;height:16px;background:#a8a8a8"></div>
<svg class="a" style="left:8px;top:559px" width="60" height="10" viewBox="0 0 60 10"><path d="M1.5 1v8" stroke="#000" stroke-width="1.5"/><path d="M8 1v8L2.5 5z" fill="#000"/><path d="M24 1v8l-5-4z" fill="#000"/><path d="M35 1v8l5-4z" fill="#000"/><path d="M51 1v8l5.5-4z" fill="#000"/><path d="M57 1v8" stroke="#000" stroke-width="1.5"/></svg>
<div class="a" style="left:69px;top:556px;width:1px;height:15px;background:#a0a0a0"></div>
<div class="a" style="left:200px;top:555px;width:112px;height:16px;background:#fafafa"></div>
<div class="a" style="left:76px;top:570px;width:124px;height:1px;background:#9a9a9a"></div>
<div class="a" style="left:312px;top:570px;width:635px;height:1px;background:#9a9a9a"></div>
<svg class="a" style="left:68px;top:555px" width="900" height="17" viewBox="0 0 900 17">
<g stroke="#000" stroke-width="1" fill="none">
<path d="M3 1l6 15"/>
<path d="M73 16l6-15M75.5 9.5l3 6"/>
<path d="M127 1l6 15"/>
<path d="M244 16l6-15"/>
<path d="M295 16l6-15M297.5 9.5l3 6"/>
<path d="M353 16l6-15M355.5 9.5l3 6"/>
<path d="M394 16l6-15M396.5 9.5l3 6"/>
<path d="M434 16l6-15M436.5 9.5l3 6"/>
<path d="M468 16l6-15M470.5 9.5l3 6"/>
<path d="M504 16l6-15M506.5 9.5l3 6"/>
<path d="M537 16l6-15M539.5 9.5l3 6"/>
<path d="M594 16l6-15M596.5 9.5l3 6"/>
<path d="M671 16l6-15M673.5 9.5l3 6"/>
<path d="M734 16l6-15M736.5 9.5l3 6"/>
<path d="M807 16l6-15M809.5 9.5l3 6"/>
<path d="M878 16l6-15"/>
</g></svg>
<div class="tab" style="left:83px">Erklärung</div>
<div class="tab" style="left:153px">Muster</div>
<div class="tab" style="left:205px;font-weight:bold;font-size:12px;letter-spacing:0.2px;top:558px">Gesamtübersicht</div>
<div class="tab" style="left:322px">Januar</div>
<div class="tab" style="left:373px">Februar</div>
<div class="tab" style="left:431px">März</div>
<div class="tab" style="left:473px">April</div>
<div class="tab" style="left:512px">Mai</div>
<div class="tab" style="left:546px">Juni</div>
<div class="tab" style="left:581px">Juli</div>
<div class="tab" style="left:616px">August</div>
<div class="tab" style="left:673px">September</div>
<div class="tab" style="left:750px">Oktober</div>
<div class="tab" style="left:812px">November</div>
<div class="tab" style="left:886px">Dezember</div>
<!-- h scrollbar -->
<div class="a" style="left:1037px;top:555px;width:5px;height:16px;background:#f2f2f2;border-left:1px solid #d0d0d0"></div>
<div class="a" style="left:1042px;top:555px;width:2px;height:16px;background:#111"></div>
<div class="sb" style="left:1044px;top:556px;width:16px;height:15px"></div>
<div class="sb" style="left:1061px;top:556px;width:12px;height:15px"></div>
<div class="sb" style="left:1074px;top:556px;width:16px;height:15px"></div>
<svg class="a" style="left:1047px;top:559px" width="10" height="9"><path d="M6.5 1L3 4.5 6.5 8" fill="none" stroke="#4a5060" stroke-width="2"/></svg>
<svg class="a" style="left:1077px;top:559px" width="10" height="9"><path d="M3.5 1L7 4.5 3.5 8" fill="none" stroke="#4a5060" stroke-width="2"/></svg>
<div class="a" style="left:1090px;top:555px;width:5px;height:16px;background:#f2f2f2"></div>
<div class="a" style="left:1095px;top:555px;width:1px;height:17px;background:#111"></div>
<div class="a" style="left:1096px;top:555px;width:17px;height:17px;background:#e8e8e8"></div>
<!-- v scrollbar -->
<div class="a" style="left:1095px;top:121px;width:17px;height:434px;background:#efefef;border-left:1px solid #d8d8d8"></div>
<div class="a" style="left:1096px;top:122px;width:16px;height:5px;background:#f4f4f4;border:1px solid #d0d0d0"></div>
<div class="a" style="left:1095px;top:127px;width:17px;height:2px;background:#111"></div>
<div class="sb" style="left:1096px;top:129px;width:15px;height:16px"></div>
<svg class="a" style="left:1099px;top:133px" width="10" height="8"><path d="M1 6l4-4 4 4" fill="none" stroke="#4a5060" stroke-width="2"/></svg>
<div class="sbv" style="left:1096px;top:146px;width:15px;height:357px"></div>
<div class="a" style="left:1100px;top:321px;width:7px;height:7px;background:repeating-linear-gradient(#9a9a9a 0,#9a9a9a 1px,transparent 1px,transparent 2px)"></div>
<div class="sb" style="left:1096px;top:539px;width:15px;height:16px"></div>
<svg class="a" style="left:1099px;top:543px" width="10" height="8"><path d="M1 2l4 4 4-4" fill="none" stroke="#4a5060" stroke-width="2"/></svg>
<!-- status bar -->
<div class="a" style="left:4px;top:572px;width:1109px;height:20px;background:#e0e0e0;border-top:1px solid #f6f6f6"></div>
<div class="a" style="left:9px;top:577px;font-size:11px;line-height:14px">Bereit</div>
<div class="a" style="left:1002px;top:577px;font-size:11px;line-height:14px">NF</div>
<div class="a" style="left:792px;top:575px;width:33px;height:16px;border:1px solid #ececec"></div>
<div class="a" style="left:826px;top:575px;width:108px;height:16px;border:1px solid #ececec"></div>
<div class="a" style="left:935px;top:575px;width:26px;height:16px;border:1px solid #ececec"></div>
<div class="a" style="left:962px;top:575px;width:56px;height:16px;border:1px solid #ececec"></div>
<div class="a" style="left:1019px;top:575px;width:29px;height:16px;border:1px solid #ececec"></div>
<div class="a" style="left:1049px;top:575px;width:25px;height:16px;border:1px solid #ececec"></div>
<div class="a" style="left:1075px;top:575px;width:19px;height:16px;border:1px solid #ececec"></div>
<svg class="a" style="left:1099px;top:579px" width="13" height="12" viewBox="0 0 13 12"><g fill="#b8b8b8"><rect x="10" y="2" width="2" height="2"/><rect x="7" y="5" width="2" height="2"/><rect x="10" y="5" width="2" height="2"/><rect x="4" y="8" width="2" height="2"/><rect x="7" y="8" width="2" height="2"/><rect x="10" y="8" width="2" height="2"/></g><g fill="#fff"><rect x="11" y="3" width="1" height="1"/><rect x="8" y="6" width="1" height="1"/><rect x="11" y="6" width="1" height="1"/><rect x="5" y="9" width="1" height="1"/><rect x="8" y="9" width="1" height="1"/><rect x="11" y="9" width="1" height="1"/></g></svg>

</div></body></html>
